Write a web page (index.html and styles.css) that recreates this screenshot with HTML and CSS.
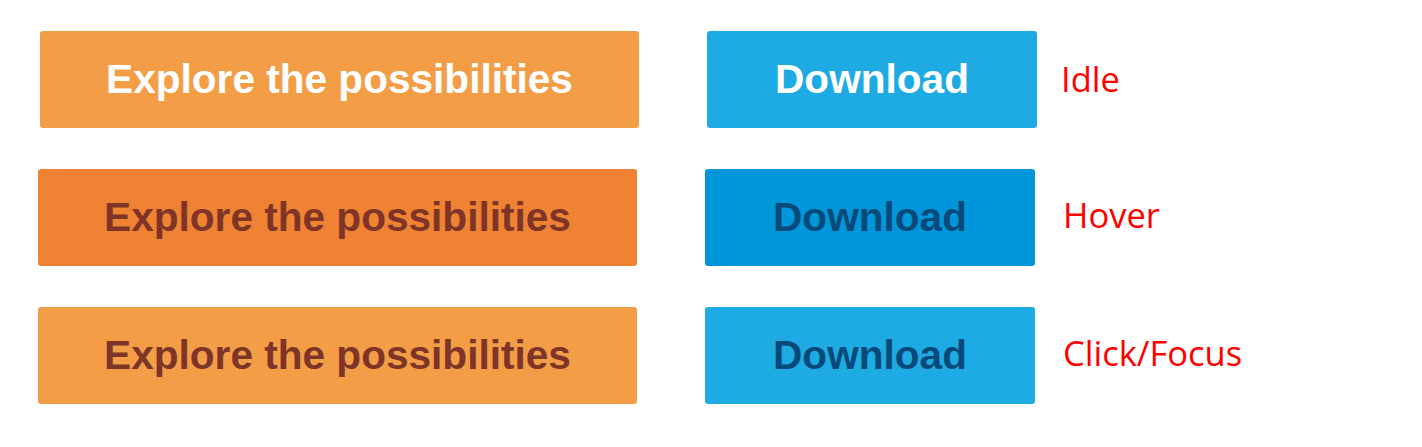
FILE: index.html
```html
<!DOCTYPE html>
<html>
<head>
<meta charset="utf-8">
<link rel="stylesheet" href="styles.css">
</head>
<body>
<div class="page">
  <div class="row row-first">
    <div class="btn btn-orange">Explore the possibilities</div>
    <div class="btn btn-blue">Download</div>
    <div class="label label-first">Idle</div>
  </div>
  <div class="row">
    <div class="btn btn-orange hover">Explore the possibilities</div>
    <div class="btn btn-blue hover">Download</div>
    <div class="label">Hover</div>
  </div>
  <div class="row">
    <div class="btn btn-orange focus">Explore the possibilities</div>
    <div class="btn btn-blue focus">Download</div>
    <div class="label">Click/Focus</div>
  </div>
</div>
</body>
</html>
```

FILE: styles.css
```css
html, body {
  margin: 0;
  padding: 0;
  background: #ffffff;
}
.page {
  padding: 31px 0 0 38px;
  display: flex;
  flex-direction: column;
  gap: 41px;
}
.row {
  display: flex;
  align-items: center;
}
.row-first {
  margin-left: 2px;
}
.btn {
  height: 97px;
  border-radius: 3px;
  display: flex;
  align-items: center;
  justify-content: center;
  font-family: "Liberation Sans", Arial, sans-serif;
  font-weight: bold;
  font-size: 40.6px;
  color: #ffffff;
  box-sizing: border-box;
}
.btn-orange {
  width: 599px;
  background: #f39d47;
}
.btn-blue {
  width: 330px;
  margin-left: 68px;
  background: #1eaae2;
}
.btn-orange.hover {
  background: #ef8233;
  color: #7e3528;
}
.btn-orange.focus {
  color: #7e3528;
}
.btn-blue.hover {
  background: #0096d9;
  color: #074a7a;
}
.btn-blue.focus {
  color: #074a7a;
}
.label {
  margin-left: 28px;
  font-family: "Open Sans", "Noto Sans", sans-serif;
  font-size: 34.5px;
  color: #ff0000;
  margin-top: -6px;
}
.label-first {
  margin-left: 24px;
  margin-top: -2px;
}
```
